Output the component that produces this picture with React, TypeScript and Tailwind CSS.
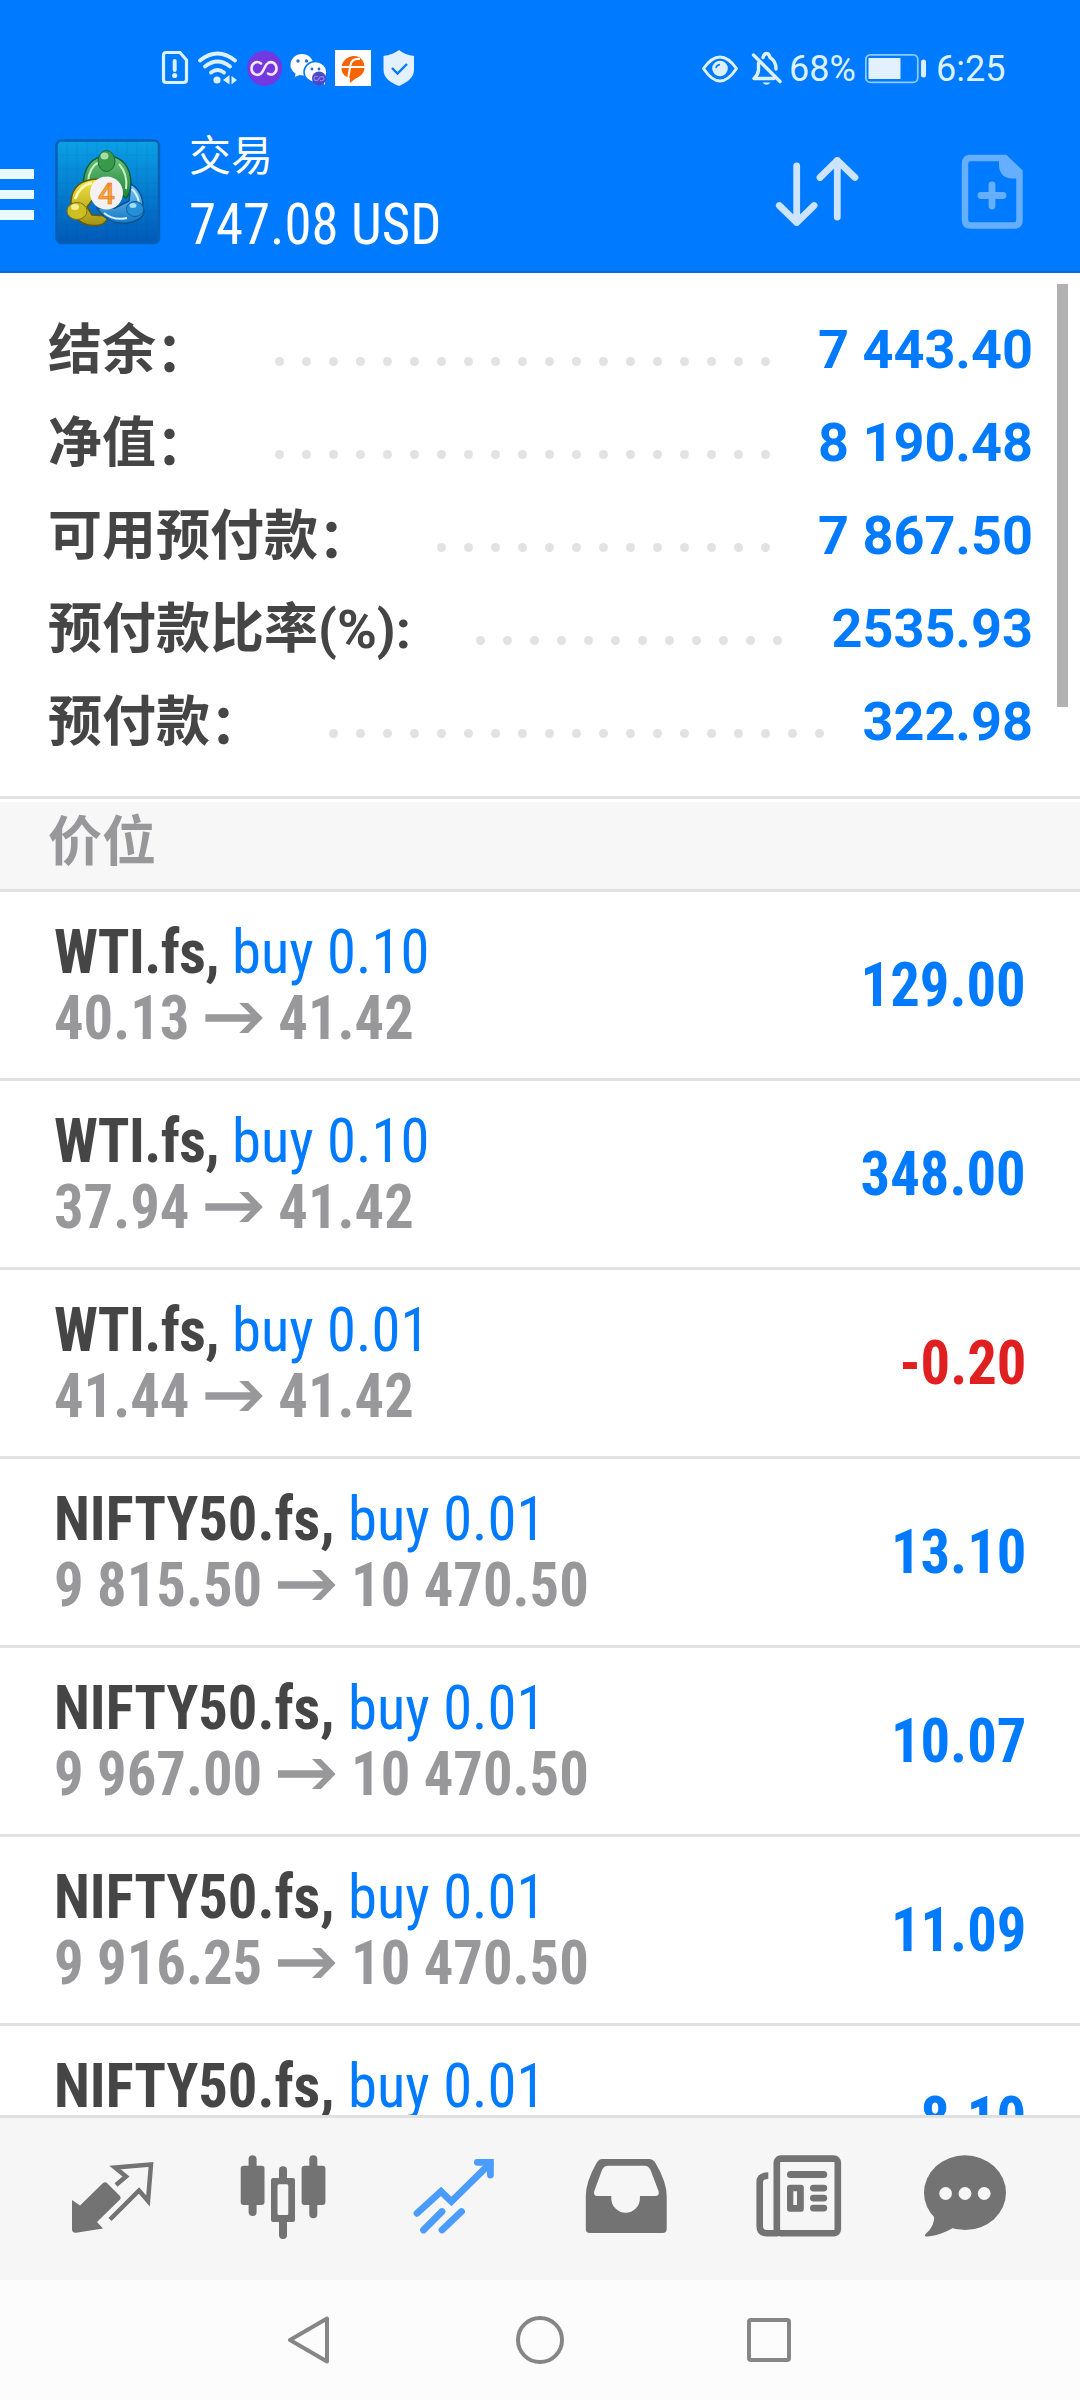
import type { ReactNode } from "react";

type Summary = { label: string; value: string; dots: number; dotsGap: string };

const summary: Summary[] = [
  { label: "结余：", value: "7 443.40", dots: 19, dotsGap: "mr-[262px]" },
  { label: "净值：", value: "8 190.48", dots: 19, dotsGap: "mr-[262px]" },
  { label: "可用预付款：", value: "7 867.50", dots: 13, dotsGap: "mr-[262px]" },
  { label: "预付款比率(%):", value: "2535.93", dots: 12, dotsGap: "mr-[250px]" },
  { label: "预付款：", value: "322.98", dots: 19, dotsGap: "mr-[208px]" },
];

const positions = [
  { symbol: "WTI.fs", side: "buy 0.10", open: "40.13", current: "41.42", profit: "129.00" },
  { symbol: "WTI.fs", side: "buy 0.10", open: "37.94", current: "41.42", profit: "348.00" },
  { symbol: "WTI.fs", side: "buy 0.01", open: "41.44", current: "41.42", profit: "-0.20" },
  { symbol: "NIFTY50.fs", side: "buy 0.01", open: "9 815.50", current: "10 470.50", profit: "13.10" },
  { symbol: "NIFTY50.fs", side: "buy 0.01", open: "9 967.00", current: "10 470.50", profit: "10.07" },
  { symbol: "NIFTY50.fs", side: "buy 0.01", open: "9 916.25", current: "10 470.50", profit: "11.09" },
  { symbol: "NIFTY50.fs", side: "buy 0.01", open: "9 930.00", current: "10 470.50", profit: "8.10" },
];

function StatusBar() {
  return (
    <div className="flex h-[136px] items-start pt-[48px] text-[#dcf1ff]">
      <svg className="ml-[160px] h-10 w-[260px]" viewBox="160 48 260 40" fill="none">
        <path d="M166 52.5H180L186.500 60V79.500Q186.500 82.500 183.500 82.500H166Q163.500 82.500 163.500 79.500V55.500Q163.500 52.500 166 52.500Z" stroke="currentColor" strokeWidth="3.2" />
        <path d="M174.700 61V70" stroke="currentColor" strokeWidth="4" strokeLinecap="round" />
        <circle cx="174.700" cy="75.500" r="2.600" fill="currentColor" />
        <g stroke="currentColor" strokeWidth="3.800" strokeLinecap="round">
          <path d="M200 60.500Q217.500 46.500 235 60.500" />
          <path d="M205 66.500Q217.500 56.500 230 66.500" />
          <path d="M211 72.500Q217.500 67.500 224 72.500" />
        </g>
        <circle cx="217" cy="80" r="3.600" fill="currentColor" />
        <path d="M223 80L229.500 75V84.500ZM231.500 76L237 80L231.500 84.500Z" fill="currentColor" />
        <circle cx="264.700" cy="68.300" r="17.500" fill="#7438e0" />
        <path d="M261 63.500C256.500 60 251.500 63.500 251.500 68.500C251.500 74 257 76.500 261 73.500C265 70 264 65.500 268 63C272.500 60.500 276.500 64 276.500 68.500C276.500 73.500 271.500 76 268 73.500" stroke="#f3e8ff" strokeWidth="2.600" strokeLinecap="round" />
        <path d="M302 54C296 54 290.500 58.500 290.500 65C290.500 69 293 71.500 295.500 73.500L295 77L299.500 75C309 77 313.500 71 313.500 65C313.500 58.500 308 54 302 54Z" fill="#fff" />
        <ellipse cx="315.500" cy="72" rx="11.500" ry="10.500" fill="#fff" stroke="#007aff" strokeWidth="1.500" />
        <path d="M320 80L325 85L325 77Z" fill="#fff" />
        <g fill="#2a6fd6">
          <circle cx="298" cy="61" r="1.700" />
          <circle cx="306.500" cy="61" r="1.700" />
          <circle cx="312" cy="69" r="1.400" />
          <circle cx="319" cy="69" r="1.400" />
        </g>
        <circle cx="319" cy="78.500" r="7" fill="#4f46c8" />
        <path d="M318 76.500q-4-1-4 2t4 1.500l2-3q4-1 4 1.500t-4 2" stroke="#8f8af0" strokeWidth="1.200" />
        <path d="M335 50H371V86H335Z" fill="#fff" />
        <path d="M353 56C360 55 365 61 364.500 68C364 75 358 77 355 79L350 83V78C344 77 341 72 341.500 67C342 61 347 57 353 56Z" fill="#f76300" />
        <path d="M360 59Q352 58 350.500 65L348 79M341 67H365" stroke="#fff" strokeWidth="2" />
        <path d="M399 50C403 53.500 408 55 414 56V70C414 78 406 83 399 86C391 83 383.500 78 383.500 70V56C390 55 394 53.500 399 50Z" fill="#e3f0fe" />
        <path d="M392 68L397.500 73.500L407 64" stroke="#007aff" strokeWidth="2.400" />
      </svg>
      <svg className="ml-[280px] h-10 w-[84px]" viewBox="700 48 84 40" fill="none" stroke="currentColor">
        <path d="M703.500 68.500Q720 45.500 736.500 68.500Q720 93.500 703.500 68.500Z" strokeWidth="3" strokeLinejoin="round" />
        <circle cx="720" cy="68.500" r="7.800" fill="currentColor" stroke="none" />
        <path d="M716 68Q716.500 65 720 64.500" stroke="#007aff" strokeWidth="1.600" />
        <g strokeWidth="3.400" strokeLinecap="round" strokeLinejoin="round">
          <path d="M753.500 55L780 81.500" />
          <path d="M758.500 63V70Q758 75 754 78.500H774" />
          <path d="M763 57.500Q764 53.500 766.500 53.500Q769 53.500 770 57.500Q776 61 776 69" />
        </g>
        <path d="M762.500 82.500Q766.500 87 770.500 82.500Z" fill="currentColor" stroke="none" />
      </svg>
      <span className="ml-[5px] w-[72px] whitespace-nowrap font-['Roboto'] text-[36px] leading-[43px]">68%</span>
      <svg className="ml-[4px] h-10 w-[64px]" viewBox="865 48 64 40" fill="none">
        <rect x="865.800" y="54.800" width="52" height="27.500" rx="4.500" stroke="#8accff" strokeWidth="1.800" />
        <rect x="868.500" y="58" width="32" height="21" fill="#e3f0fe" />
        <rect x="921" y="59.500" width="5" height="18" rx="2.500" fill="currentColor" />
      </svg>
      <span className="ml-[7px] whitespace-nowrap font-['Roboto'] text-[36px] leading-[43px]">6:25</span>
    </div>
  );
}

function AppLogo() {
  return (
    <svg className="ml-[21px] h-[106px] w-[106px]" viewBox="0 0 106 106">
      <defs>
        <linearGradient id="tile" x2="0" y2="1">
          <stop stopColor="#0aa0e6" />
          <stop offset="1" stopColor="#0059b8" />
        </linearGradient>
        <linearGradient id="green" x2="0" y2="1">
          <stop stopColor="#6cc07a" />
          <stop offset="1" stopColor="#1f8437" />
        </linearGradient>
        <linearGradient id="gold" x2="0" y2="1">
          <stop stopColor="#f5e33f" />
          <stop offset="1" stopColor="#a29414" />
        </linearGradient>
        <linearGradient id="sky" x2="0" y2="1">
          <stop stopColor="#7cc8f2" />
          <stop offset="1" stopColor="#1177c4" />
        </linearGradient>
      </defs>
      <rect x="1.500" y="1.500" width="102.500" height="102.500" rx="5" fill="url(#tile)" stroke="#0760b4" strokeWidth="2.500" />
      <path d="M12 3V103M22 3V103M32 3V103M42 3V103M52 3V103M62 3V103M72 3V103M82 3V103M92 3V103M3 16H103M3 30H103M3 44H103M3 58H103M3 72H103M3 86H103" stroke="#003f90" strokeOpacity=".08" />
      <path d="M28 48C28 27 38 17 52 17C67 17 76 28 76 45Q76 54 71 59L57 50L51 38Q42 41 38 49L30 46Z" fill="url(#green)" stroke="#0c5f35" strokeWidth="1.500" />
      <path d="M33 43Q34 28 44 23M64 25Q73 35 71 50" fill="none" stroke="#c8f0c6" strokeWidth="2" />
      <path d="M44 40Q22 40 17 56Q14 67 20 77Q28 89 45 86Q52 84 53 77L37 76L32 68L38 60Z" fill="url(#gold)" stroke="#5f5a10" strokeWidth="1.500" />
      <path d="M20 60Q25 46 37 44" fill="none" stroke="#fff8b8" strokeWidth="2.500" />
      <path d="M76 45Q88 52 88 68Q91 76 84 80Q72 87 59 83Q48 79 42 69L60 69L74 62Z" fill="url(#sky)" stroke="#0d5391" strokeWidth="1.500" />
      <path d="M77 50Q84 57 84 66M49 74Q59 82 72 79" fill="none" stroke="#d3f1ff" strokeWidth="2" />
      <ellipse cx="51.500" cy="22" rx="8.500" ry="10.500" fill="#38994b" stroke="#15693b" />
      <ellipse cx="49.500" cy="17" rx="4" ry="3.500" fill="#a5dca7" />
      <ellipse cx="22" cy="72" rx="10" ry="8.500" fill="#cdbf22" stroke="#7b7414" />
      <ellipse cx="20" cy="68" rx="4" ry="3" fill="#f6ee8e" />
      <ellipse cx="80" cy="70" rx="8.500" ry="7.500" fill="#2390d8" stroke="#0d5fa5" />
      <ellipse cx="78" cy="66.500" rx="3.500" ry="2.500" fill="#a4dcf8" />
      <circle cx="51.500" cy="54" r="16.500" fill="#f3f1f4" />
      <text x="51.500" y="64.500" textAnchor="middle" fill="#f8a13a" stroke="#e8781e" strokeWidth=".6" className="font-['Roboto'] text-[30px] font-medium">4</text>
    </svg>
  );
}

function Header() {
  return (
    <div className="flex h-[137px] border-b-2 border-[#0a6bd0]">
      <div className="mt-[33px] flex w-[34px] flex-col gap-[11px]">
        <span className="h-[9.500px] bg-[#eaf8ff]" />
        <span className="h-[9.500px] bg-[#eaf8ff]" />
        <span className="h-[9.500px] bg-[#eaf8ff]" />
      </div>
      <div className="mt-[3px]"><AppLogo /></div>
      <div className="ml-[28px] w-[400px] text-white">
        <p className="mt-px font-['Roboto','Noto_Sans_CJK_SC',sans-serif] text-[42px] leading-[40px]">交易</p>
        <p className="mt-[14px] origin-left scale-x-[.96] whitespace-nowrap font-['Roboto_Condensed','Roboto',sans-serif] text-[57px] leading-[68px] font-stretch-75%">747.08 USD</p>
      </div>
      <svg className="ml-[184px] mt-[16px] h-20 w-[88px]" viewBox="773 152 88 80" fill="none" stroke="#cce4ff" strokeWidth="6.800" strokeLinecap="round" strokeLinejoin="round">
        <path d="M796.700 166V222.500M779.300 205.500L796.700 222.500L814.100 205.500" />
        <path d="M837.300 217V160.500M820 177.500L837.300 160.500L855 177.500" />
      </svg>
      <svg className="ml-[98px] mt-[16px] h-20 w-[68px]" viewBox="959 152 68 80" fill="none" stroke="#66afff">
        <path d="M968 158H1005L1019.500 172V220Q1019.500 225.500 1014.500 225.500H970.500Q965 225.500 965 220V163.500Q965 158 970.500 158" strokeWidth="6.500" />
        <path d="M999 158V166Q1000 178 1012 178.500H1021V172L1006 157Z" fill="#66afff" stroke="none" />
        <path d="M992 185V206M981 195.500H1003" strokeWidth="6.800" strokeLinecap="round" />
      </svg>
    </div>
  );
}

function SummaryRow({ label, value, dots, dotsGap }: Summary) {
  const wideColon = label.endsWith("：");
  return (
    <div className="relative flex h-[93px] items-center justify-between pl-12 pr-[47px]">
      <span className="whitespace-pre pt-[2px] font-['Roboto','Noto_Sans_CJK_SC',sans-serif] text-[54px] font-bold leading-[93px] text-[#454545]">
        {wideColon ? label.slice(0, -1) : label}
        {wideColon && <span className="relative top-[3px]">：</span>}
      </span>
      <div className={`absolute right-[48px] top-[54px] flex gap-[18px] ${dotsGap}`}>
        {Array.from({ length: dots }, (_, i) => <i key={i} className="size-[9px] rounded-full bg-[#e2e2e2]" />)}
      </div>
      <span className="font-['Roboto'] text-[54px] font-bold leading-[93px] text-[#007aff]">{value}</span>
    </div>
  );
}

function PositionRow({ symbol, side, open, current, profit }: (typeof positions)[number]) {
  return (
    <div className="flex h-[189px] shrink-0 items-start justify-between border-b-[3px] border-[#e2e2e2] pl-[54px] pr-[54px] font-['Roboto_Condensed','Roboto',sans-serif] text-[62px] leading-[66px] font-stretch-75%">
      <div className="origin-left scale-x-[.945] whitespace-nowrap pt-[27px]">
        <p className="font-bold text-[#454545]">
          <span className={symbol.startsWith("W") ? "tracking-[-.6px]" : ""}>{symbol}, </span>
          <span className="font-normal text-[#007aff]">{side}</span>
        </p>
        <p className="flex font-bold text-[#98989b]">
          {open}
          <svg className="ml-[17px] mr-[16px] mt-[17px] h-[32px] w-[61px]" viewBox="0 0 61 32" fill="currentColor">
            <path d="M0 12.300H48L36 1H45.500L61 16L45.500 31H36L48 19.700H0Z" />
          </svg>
          {current}
        </p>
      </div>
      <span className={`origin-right scale-x-[.945] pt-[60px] font-bold ${profit.startsWith("-") ? "text-[#e02020]" : "text-[#007aff]"}`}>{profit}</span>
    </div>
  );
}

function TabIcon({ children, className = "text-[#737373]" }: { children: ReactNode; className?: string }) {
  return <svg className={`h-24 w-[88px] shrink-0 overflow-visible ${className}`} viewBox="0 0 88 96" fill="currentColor">{children}</svg>;
}

function TabBar() {
  return (
    <nav className="flex h-[165px] gap-[83px] border-t-[3px] border-[#e0e0e0] bg-[#f6f6f6] pl-[68px] pt-[32px]">
      <TabIcon>
        <path d="M4 50L12 55.500L35 33Q37 31.500 39 33L52 46Q53.500 48 52 49.500L29 72L35 78.500L8 82.700Q4 83 4 79Z" />
        <path d="M48 35L58 26.500L47 17.500L83 14.500L80 51L71 40.500L42 69.500" fill="none" stroke="currentColor" strokeWidth="4.500" />
      </TabIcon>
      <TabIcon>
        <rect x="1.700" y="15.700" width="23.800" height="39.300" rx="3" />
        <rect x="9.600" y="5.300" width="8" height="60.700" rx="4" />
        <rect x="62.600" y="15.700" width="23.800" height="39.300" rx="3" />
        <rect x="70.300" y="5.300" width="8" height="63" rx="4" />
        <path fillRule="evenodd" d="M34 28H40V20Q40 16.300 44 16.300T48 20V28H54Q56 28 56 30V70Q56 72 54 72H48V85Q48 89 44 89T40 85V72H34Q32 72 32 70V30Q32 28 34 28ZM40 34.300Q38.500 34.300 38.500 36V63.500Q38.500 65 40 65H48Q49.300 65 49.300 63.500V36Q49.300 34.300 48 34.300Z" />
      </TabIcon>
      <TabIcon className="text-[#4a9cff]">
        <g fill="none" stroke="currentColor" strokeWidth="6.800" strokeLinecap="round">
          <path d="M7 63.300L31 41.500L41.400 51.500L80 13.500" strokeLinejoin="miter" />
          <path d="M67.300 12.300H80.400V25" />
          <path d="M13.500 80L32 61.500M32 80L51.500 61.500" />
        </g>
      </TabIcon>
      <TabIcon>
        <path fillRule="evenodd" d="M21 9H68Q72 9 74.500 13Q85.700 32 85.700 46V79Q85.700 83 81.700 83H8.800Q4.800 83 4.800 79V46Q4.800 32 15.500 13Q18 9 21 9ZM27 15.700Q23 15.700 21 20L13.300 41Q12 46 16.500 46H30.300V48.500A14.300 14.300 0 0 0 58.900 48.500V46H74Q79 46 77.500 41L69.500 20Q67.500 15.700 63.500 15.700Z" />
      </TabIcon>
      <TabIcon>
        <g fill="none" stroke="currentColor">
          <rect x="24.800" y="8.600" width="61" height="74.700" rx="4" strokeWidth="6.600" />
          <path d="M16.300 25.600Q7.700 25.600 7.700 32V76Q7.700 83.300 15 83.300H26" strokeWidth="6.600" />
        </g>
        <rect x="35" y="21" width="40.200" height="7" rx="3.500" />
        <path fillRule="evenodd" d="M38 34.700H49Q51.800 34.700 51.800 37.500V59Q51.800 61.700 49 61.700H38Q35 61.700 35 59V37.500Q35 34.700 38 34.700ZM41.300 41.300V55H45V41.300Z" />
        <rect x="58" y="34.700" width="17.200" height="6.800" rx="3.400" />
        <rect x="58" y="44.700" width="17.200" height="6.800" rx="3.400" />
        <rect x="58" y="54.700" width="17.200" height="6.800" rx="3.400" />
      </TabIcon>
      <TabIcon>
        <ellipse cx="42" cy="42.700" rx="41" ry="37.400" />
        <path d="M11.300 65Q12 76 3 83.500Q0 87 5 86.500Q18 85 30 78Z" />
        <g fill="#f6f6f6">
          <circle cx="22.600" cy="43.500" r="6.400" />
          <circle cx="42" cy="43.500" r="6.400" />
          <circle cx="61.200" cy="43.500" r="6.400" />
        </g>
      </TabIcon>
    </nav>
  );
}

function SystemNav() {
  return (
    <div className="flex h-[120px] items-center bg-[#fcfcfc] text-[#868686]">
      <svg className="ml-[284px] size-12" viewBox="0 0 48 48" fill="none" stroke="currentColor" strokeWidth="4" strokeLinejoin="round">
        <path d="M6 24L43 2.500V45.500Z" />
      </svg>
      <svg className="ml-[184px] size-12" viewBox="0 0 48 48" fill="none" stroke="currentColor" strokeWidth="4">
        <circle cx="24" cy="24" r="22" />
      </svg>
      <svg className="ml-[181px] size-12" viewBox="0 0 48 48" fill="none" stroke="currentColor" strokeWidth="4">
        <rect x="4" y="4" width="40" height="40" rx="2" />
      </svg>
    </div>
  );
}

export default function App() {
  return (
    <main className="flex h-[2400px] w-[1080px] flex-col overflow-hidden bg-white">
      <header className="shrink-0 bg-[#007aff]">
        <StatusBar />
        <Header />
      </header>
      <section className="relative h-[526px] shrink-0 border-b-[3px] border-[#e2e2e2] pt-[30px]">
        {summary.map((row) => <SummaryRow key={row.label} {...row} />)}
        <div className="absolute right-[12px] top-[11px] h-[423px] w-[11px] bg-[#b2b2b2]" />
      </section>
      <h2 className="mt-[3px] h-[90px] shrink-0 border-b-[3px] border-[#e2e2e2] bg-[#f7f7f7] pl-12 font-['Roboto','Noto_Sans_CJK_SC',sans-serif] text-[54px] font-bold leading-[81px] text-[#98989b]">价位</h2>
      <section className="flex min-h-0 flex-1 flex-col overflow-hidden">
        {positions.map((position, i) => <PositionRow key={i} {...position} />)}
      </section>
      <footer className="shrink-0">
        <TabBar />
        <SystemNav />
      </footer>
    </main>
  );
}
